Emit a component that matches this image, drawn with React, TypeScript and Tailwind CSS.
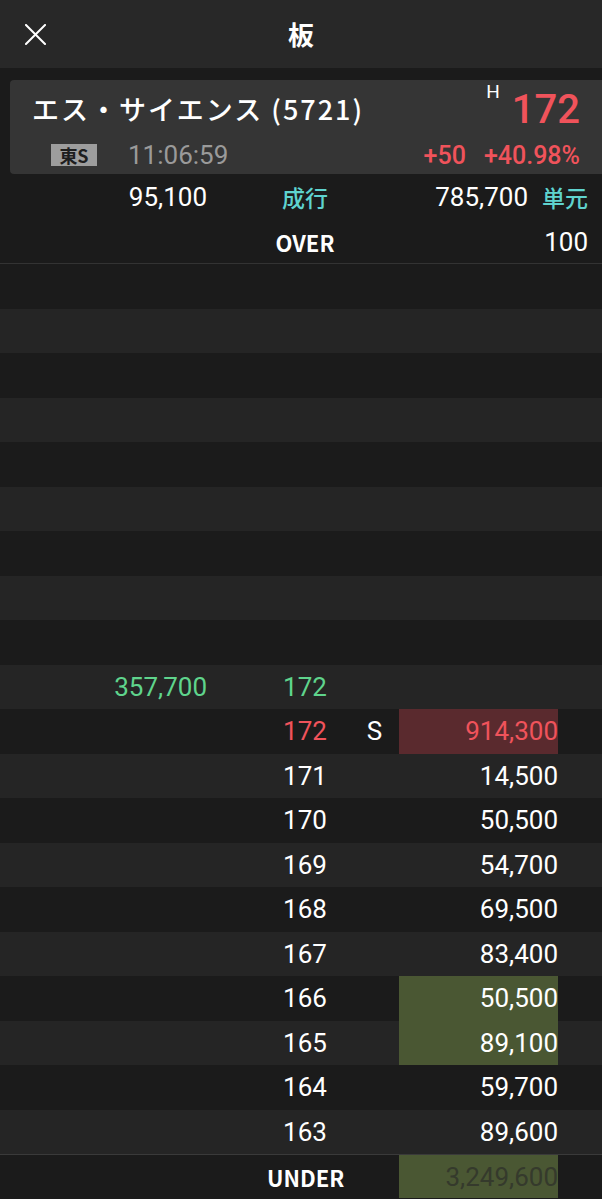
const JP = "font-['Noto_Sans_CJK_JP',sans-serif]";
const NUM = "font-['Roboto','Noto_Sans_CJK_JP',sans-serif]";

type Row = {
  bid?: string;
  price?: string;
  priceColor?: string;
  mark?: string;
  ask?: string;
  askColor?: string;
  box?: "red" | "green";
};

const rows: Row[] = [
  {}, {}, {}, {}, {}, {}, {}, {}, {},
  { bid: "357,700", price: "172", priceColor: "text-[#5fd48c]" },
  { price: "172", priceColor: "text-[#f0535b]", mark: "S", ask: "914,300", askColor: "text-[#f0535b]", box: "red" },
  { price: "171", ask: "14,500" },
  { price: "170", ask: "50,500" },
  { price: "169", ask: "54,700" },
  { price: "168", ask: "69,500" },
  { price: "167", ask: "83,400" },
  { price: "166", ask: "50,500", box: "green" },
  { price: "165", ask: "89,100", box: "green" },
  { price: "164", ask: "59,700" },
  { price: "163", ask: "89,600" },
];

const BookRow = ({ row, index }: { row: Row; index: number }) => {
  const bg = index % 2 === 0 ? "bg-[#1b1b1b]" : "bg-[#252525]";
  const boxBg = row.box === "red" ? "bg-[#5a2a2e]" : row.box === "green" ? "bg-[#4a5733]" : "";
  return (
    <div className={`grid h-[44.5px] grid-cols-[207px_53px_90px_49px_159px_1fr] ${bg} ${NUM} text-[26px] leading-none text-white`}>
      <div className="flex items-center justify-end text-[#5fd48c]">{row.bid}</div>
      <div />
      <div className={`flex items-center justify-center ${row.priceColor ?? "text-white"}`}>{row.price}</div>
      <div className="flex items-center justify-center">{row.mark}</div>
      <div className={`flex items-center justify-end ${boxBg} ${row.askColor ?? "text-white"}`}>{row.ask}</div>
      <div />
    </div>
  );
};

export default function App() {
  return (
    <div className="flex h-[1199px] w-[602px] flex-col overflow-hidden bg-[#1b1b1b] text-white">
      {/* header */}
      <div className="relative flex h-[68px] shrink-0 items-center justify-center bg-[#282828]">
        <svg className="absolute left-[25px] top-[24px]" width="21" height="21" viewBox="0 0 21 21">
          <path d="M1 1 L20 20 M20 1 L1 20" stroke="#ffffff" strokeWidth="2" strokeLinecap="square" />
        </svg>
        <span className={`${JP} text-[26px] font-bold leading-none`}>板</span>
      </div>

      {/* stock card */}
      <div className="pt-[12px] pl-[10px]">
        <div className="flex h-[94px] flex-col rounded-l-[4px] bg-[#353535]">
          <div className="flex h-[56px] items-center justify-between pl-[22px] pr-[22px]">
            <span className={`${JP} text-[27px] font-medium leading-none tracking-[2px] text-white`}>
              エス・サイエンス (5721)
            </span>
            <div className="flex items-start pt-[4px]">
              <span className={`${NUM} mr-[12px] mt-[-8px] text-[19px] leading-none`}>H</span>
              <span className={`${NUM} text-[40px] font-medium leading-none text-[#f0535b]`}>172</span>
            </div>
          </div>
          <div className="flex h-[38px] items-center pl-[41px] pr-[22px]">
            <span className={`${JP} flex h-[22px] w-[46px] items-center justify-center bg-[#9d9d9d] text-[18px] font-bold leading-none text-[#1e1e1e]`}>
              東S
            </span>
            <span className={`${NUM} ml-[31px] text-[26px] leading-none text-[#9a9a9a]`}>11:06:59</span>
            <div className={`${NUM} ml-auto flex items-center gap-[18px] text-[25px] font-medium leading-none text-[#f0535b]`}>
              <span>+50</span>
              <span>+40.98%</span>
            </div>
          </div>
        </div>
      </div>

      {/* market / unit row */}
      <div className={`flex h-[46px] shrink-0 items-center ${NUM} text-[26px] leading-none`}>
        <div className="w-[207px] text-right">95,100</div>
        <div className={`${JP} w-[196px] text-center text-[23px] font-medium text-[#5fd3cf]`}>成行</div>
        <div className="flex-1 text-right">785,700</div>
        <div className={`${JP} ml-[14px] mr-[14px] text-[23px] font-medium text-[#5fd3cf]`}>単元</div>
      </div>

      {/* OVER */}
      <div className="flex h-[44px] shrink-0 items-center border-b border-[#333333] leading-none">
        <div className="w-[207px]" />
        <div className={`${JP} w-[196px] text-center text-[22px] font-bold`}>OVER</div>
        <div className={`${NUM} flex-1 pr-[14px] text-right text-[26px]`}>100</div>
      </div>

      {/* board */}
      <div className="flex flex-col">
        {rows.map((row, i) => (
          <BookRow key={i} row={row} index={i} />
        ))}
      </div>

      {/* UNDER */}
      <div className="grid h-[44px] shrink-0 grid-cols-[207px_53px_90px_49px_159px_1fr] border-t border-[#3a3a3a] leading-none">
        <div />
        <div className={`${JP} col-span-3 flex items-center pl-[60px] text-[22px] font-bold`}>UNDER</div>
        <div className={`${NUM} flex items-center justify-end bg-[#4a5733] text-[26px] text-[#353a2c]`}>3,249,600</div>
        <div />
      </div>
    </div>
  );
}
